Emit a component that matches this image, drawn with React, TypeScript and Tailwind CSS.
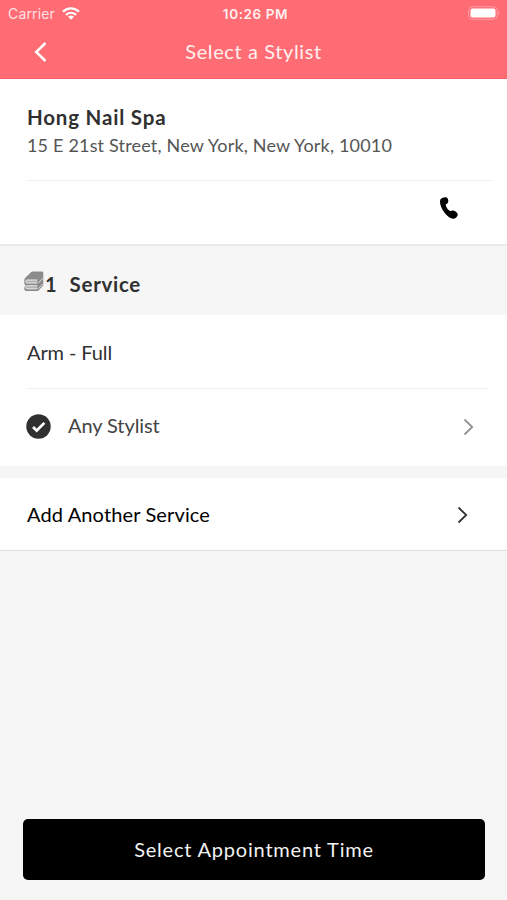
import React from 'react';

function Chevron({ className, width = 2 }: { className: string; width?: number }) {
  return (
    <svg width="11" height="18" viewBox="0 0 11 18" fill="none" stroke="currentColor" strokeWidth={width} className={className}>
      <path d="M1.500 1.500 9.200 9 1.500 16.500" />
    </svg>
  );
}

function StatusBar() {
  return (
    <div className="flex h-[27px] items-center justify-between pl-2 pr-[7px] font-['Inter','Liberation_Sans',sans-serif] text-[13.5px] leading-[27px]">
      <div className="flex w-[150px] items-center gap-[7px]">
        <span className="text-[14px] tracking-[0.15px] text-[#ffe0e2]">Carrier</span>
        <svg width="18" height="13" viewBox="0 0 18 13" fill="none" stroke="white" strokeWidth="2.300">
          <path d="M1 4.600C5.700.200 12.300.200 17 4.600" />
          <path d="M4 7.800c3-2.700 7-2.700 10 0" />
          <path d="M6.100 9.700c1.800-1.500 4-1.500 5.800 0L9 12.800Z" fill="white" stroke="none" />
        </svg>
      </div>
      <span className="ml-[3px] mt-px font-semibold tracking-[0.6px] text-[#fff0f0]">10:26 PM</span>
      <div className="flex w-[150px] items-center justify-end">
        <svg width="32" height="14" viewBox="0 0 32 14" className="-mt-px">
          <rect x=".7" y=".7" width="28.600" height="12.600" rx="4" fill="none" stroke="#ff9da2" />
          <rect x="2.500" y="2.400" width="25" height="9.200" rx="2" fill="white" />
          <path d="M30.500 5c1.300.800 1.300 3.200 0 4Z" fill="#ffa5a9" />
        </svg>
      </div>
    </div>
  );
}

export default function App() {
  return (
    <main className="flex h-[900px] w-[507px] flex-col overflow-hidden bg-[#f6f6f6] font-['Lato','Liberation_Sans',sans-serif] text-[20px] text-[#303030]">
      <header className="h-[79px] shrink-0 border-b border-[#fa6167] bg-[#ff6c73] text-white">
        <StatusBar />
        <div className="flex h-[50px] items-center justify-between px-[34px]">
          <svg width="14" height="22" viewBox="0 0 14 22" fill="none" stroke="white" strokeWidth="2.500">
            <path d="M11.500 2 2.200 11l9.300 9" />
          </svg>
          <h1 className="-mt-[2px] tracking-[0.6px] text-[#fff0f0]">Select a Stylist</h1>
          <span className="w-[14px]" />
        </div>
      </header>

      <section className="h-[167px] shrink-0 border-b-2 border-[#e9e9e9] bg-white">
        <div className="ml-[27px] mr-[15px] h-[102px] border-b border-[#f0f0f0] pt-[24px]">
          <h2 className="text-[20.5px] leading-[28px] font-bold tracking-[0.8px]">Hong Nail Spa</h2>
          <p className="pt-px text-[18px] leading-[27px] tracking-[0.18px] whitespace-nowrap text-[#555]">15 E 21st Street, New York, New York, 10010</p>
        </div>
        <div className="flex h-[55px] items-center justify-end pr-[49px]">
          <svg width="18" height="22" viewBox="0 0 18 22" className="-mt-px text-black">
            <path d="M.500 2.200C2 .300 5.600-.300 6.800.500 8.200 1.700 8.800 4.500 7.800 6 7.100 7 5.700 7 5.800 8c.2 2.300 2.200 5 4.300 6 .9.300 1.900-.8 3.300-.6 1.700.200 4.400 2.700 4.400 4 0 2-2.700 4.300-4.700 4.300C7.400 21.500-.900 10.200.100 3.900.200 3.200.200 2.600.500 2.200Z" fill="currentColor" />
          </svg>
        </div>
      </section>

      <div className="flex h-[69px] shrink-0 items-center pl-[24px] pt-[7px] font-bold">
        <svg width="20" height="21" viewBox="0 0 20 21" className="-mt-[5px] mr-[1px]">
          <path d="M1 7 7 1.200Q7.700.500 8.700.500H18q1.800 0 1.300 2v12L14 20H2.500Q0 19.800.300 16.800q.200-1.500 1.500-2Q0 13.800.300 11.200 0 8.500 1 7Z" fill="#8b8b8b" />
          <path d="M13.300 9H3.200Q1.800 9 1.800 10.500T3.200 12h10.100M13.300 14.800H3.200q-1.400 0-1.400 1.500t1.400 1.500h10.100" fill="#b2b2b2" stroke="#ededed" strokeWidth="1" strokeLinejoin="round" />
          <path d="m14.300 12 4.500-4.700M14.300 17.700l4.500-4.700" stroke="#e0e0e0" strokeWidth="1" />
        </svg>
        <span className="mr-[13px]">1</span>
        <h2 className="text-[20.5px] tracking-[0.7px]">Service</h2>
      </div>

      <section className="h-[151px] shrink-0 bg-white">
        <div className="ml-[27px] mr-[19px] flex h-[74px] items-center border-b border-[#f0f0f0] tracking-[-0.1px]">Arm - Full</div>
        <div className="flex h-[77px] items-center pb-[2px] pl-[26px] pr-[33px]">
          <svg width="25" height="25" viewBox="0 0 25 25" className="mr-[17px]">
            <circle cx="12.500" cy="12.500" r="12.200" fill="#303030" />
            <path d="m7 13 3.700 3.500 7.700-7.600" fill="none" stroke="white" strokeWidth="2.700" />
          </svg>
          <span className="-mt-[3px] tracking-[-0.08px] text-[#444]">Any Stylist</span>
          <Chevron className="ml-auto text-[#929292]" width={1.8} />
        </div>
      </section>

      <section className="mt-[12px] flex h-[73px] shrink-0 items-center border-b border-[#dedede] bg-white pl-[27px] pr-[39px] text-black">
        <span className="tracking-[0.13px]">Add Another Service</span>
        <Chevron className="ml-auto mt-[2px] text-[#333]" width={1.8} />
      </section>

      <button className="ml-[23px] mr-[22px] mt-auto mb-[20px] h-[61px] shrink-0 rounded-[5px] bg-black pb-[2px] tracking-[0.8px] text-[#f2f2f2]">Select Appointment Time</button>
    </main>
  );
}
